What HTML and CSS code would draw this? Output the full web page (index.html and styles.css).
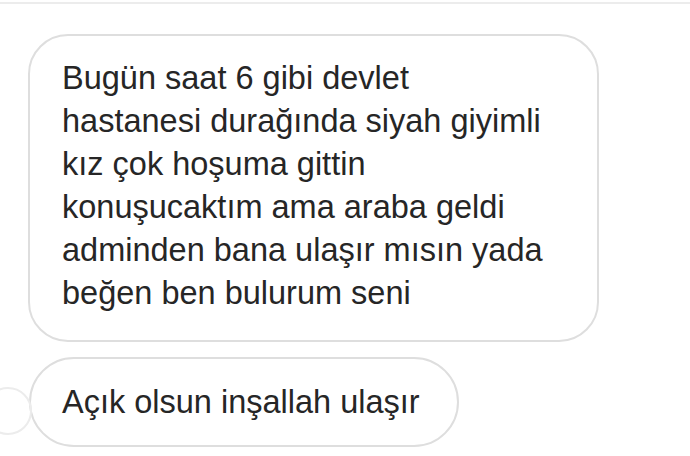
FILE: index.html
```html
<!DOCTYPE html>
<html lang="tr">
<head>
<meta charset="utf-8">
<link rel="stylesheet" href="styles.css">
</head>
<body>
<div class="topbar"></div>
<div class="thread">
  <div class="bubble big">Bugün saat 6 gibi devlet<br>hastanesi durağında siyah giyimli<br>kız çok hoşuma gittin<br>konuşucaktım ama araba geldi<br>adminden bana ulaşır mısın yada<br>beğen ben bulurum seni</div>
  <div class="row">
    <span class="avatar"></span>
    <div class="bubble small">Açık olsun inşallah ulaşır</div>
  </div>
</div>
</body>
</html>
```
FILE: styles.css
```css
html, body {
  margin: 0;
  padding: 0;
  background: #ffffff;
  width: 690px;
  height: 456px;
  overflow: hidden;
}
body {
  font-family: "Liberation Sans", Arial, sans-serif;
  color: #262626;
}
.topbar {
  height: 2px;
  border-bottom: 2px solid #ececec;
}
.thread {
  padding: 30px 0 0 28px;
  display: flex;
  flex-direction: column;
  gap: 15px;
}
.bubble {
  box-sizing: border-box;
  border: 2px solid #dedede;
  font-size: 32.5px;
  line-height: 43px;
  white-space: nowrap;
}
.big {
  width: 571px;
  height: 308px;
  border-radius: 40px;
  padding: 21px 0 0 32px;
}
.row {
  position: relative;
  display: flex;
}
.small {
  margin-left: 1px;
  width: 430px;
  height: 90px;
  border-radius: 45px;
  padding: 22px 0 0 31px;
}
.avatar {
  position: absolute;
  left: -44px;
  top: 30px;
  width: 48px;
  height: 48px;
  border-radius: 50%;
  border: 2px solid #ececec;
  box-sizing: border-box;
}
```
